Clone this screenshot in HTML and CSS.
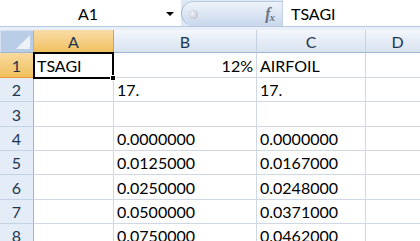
FILE: index.html
```html
<!DOCTYPE html>
<html>
<head>
<meta charset="utf-8">
<link rel="stylesheet" href="styles.css">
</head>
<body>
<div class="app">
  <div class="fbar">
    <div class="namebox"><span class="nb-text">A1</span><span class="arrow"></span></div>
    <div class="pill"><span class="dot"></span><span class="fx">f<sub>x</sub></span></div>
    <div class="formula">TSAGI</div>
  </div>
  <div class="band"></div>
  <div class="sheet">
    <div class="corner"><span class="tri"></span></div>
    <div class="ch sel">A</div>
    <div class="ch">B</div>
    <div class="ch">C</div>
    <div class="ch">D</div>

    <div class="rh sel r25">1</div>
    <div class="c active">TSAGI<span class="handle"></span></div>
    <div class="c right">12%</div>
    <div class="c">AIRFOIL</div>
    <div class="c"></div>

    <div class="rh">2</div>
    <div class="c"></div>
    <div class="c">17.</div>
    <div class="c">17.</div>
    <div class="c"></div>

    <div class="rh">3</div>
    <div class="c"></div><div class="c"></div><div class="c"></div><div class="c"></div>

    <div class="rh">4</div>
    <div class="c"></div>
    <div class="c">0.0000000</div>
    <div class="c">0.0000000</div>
    <div class="c"></div>

    <div class="rh">5</div>
    <div class="c"></div>
    <div class="c">0.0125000</div>
    <div class="c">0.0167000</div>
    <div class="c"></div>

    <div class="rh">6</div>
    <div class="c"></div>
    <div class="c">0.0250000</div>
    <div class="c">0.0248000</div>
    <div class="c"></div>

    <div class="rh">7</div>
    <div class="c"></div>
    <div class="c">0.0500000</div>
    <div class="c">0.0371000</div>
    <div class="c"></div>

    <div class="rh">8</div>
    <div class="c"></div>
    <div class="c">0.0750000</div>
    <div class="c">0.0462000</div>
    <div class="c"></div>
  </div>
</div>
</body>
</html>
```

FILE: styles.css
```css
html, body {
  margin: 0;
  padding: 0;
  background: #ffffff;
  overflow: hidden;
}
.app {
  width: 420px;
  height: 241px;
  overflow: hidden;
  font-family: Lato, "Open Sans", sans-serif;
  font-size: 16px;
  color: #000;
}
.fbar {
  display: flex;
  height: 26px;
  background: #dfe8f5;
}
.namebox {
  width: 181px;
  background: #fff;
  display: flex;
  align-items: center;
  position: relative;
}
.nb-text {
  flex: 1;
  text-align: center;
  padding-left: 10px;
}
.arrow {
  width: 0;
  height: 0;
  border-left: 4px solid transparent;
  border-right: 4px solid transparent;
  border-top: 4px solid #000;
  margin-right: 7px;
  margin-top: 1px;
}
.pill {
  width: 100px;
  margin-top: 1px;
  border-radius: 13px 0 0 13px;
  background: linear-gradient(#eef3fa, #dde7f4 45%, #c8d7ec);
  border-left: 1px solid #a5b9d4;
  border-top: 1px solid #b9cae0;
  display: flex;
  align-items: center;
  position: relative;
}
.dot {
  width: 9px;
  height: 9px;
  border-radius: 50%;
  background: radial-gradient(circle at 40% 40%, #f4f6f9, #aab3bf);
  margin-left: 7px;
}
.fx {
  margin-left: auto;
  margin-right: 8px;
  font-family: "Liberation Serif", serif;
  font-style: italic;
  font-weight: bold;
  font-size: 16px;
  color: #6d7480;
  letter-spacing: -1px;
}
.fx sub {
  font-size: 11px;
  vertical-align: -2px;
}
.formula {
  flex: 1;
  background: #fff;
  border-left: 1px solid #c3cfdf;
  padding-left: 8px;
  display: flex;
  align-items: center;
}
.band {
  height: 4px;
  border-top: 1px solid #b8c9df;
  background: #e9eff8;
  box-sizing: border-box;
}
.sheet {
  display: grid;
  grid-template-columns: 34px 80px 143px 109px 64px;
  grid-template-rows: 23px 25px 24px 25px 24px 24px 25px 24px 24px;
}
.corner {
  background: #b9cde7;
  border: 1px solid #d6e2f1;
  border-right-color: #9eb6ce;
  border-bottom-color: #9eb6ce;
  box-sizing: border-box;
  position: relative;
}
.tri {
  position: absolute;
  right: 3px;
  bottom: 3px;
  width: 0;
  height: 0;
  border-left: 14px solid transparent;
  border-bottom: 14px solid #eef1f6;
}
.ch {
  background: linear-gradient(#f4f7fc, #e5ecf6 50%, #d9e3f1);
  border-right: 1px solid #c5d2e2;
  border-bottom: 1px solid #9eb6ce;
  box-sizing: border-box;
  display: flex;
  align-items: center;
  justify-content: center;
  color: #1e3550;
}
.ch.sel {
  background: linear-gradient(#f9dca6, #f5cf86 50%, #f1c15f);
  border-right-color: #f29536;
  border-bottom-color: #f29536;
}
.rh {
  background: #e4ecf7;
  border-right: 1px solid #9eb6ce;
  border-bottom: 1px solid #c5d2e2;
  box-sizing: border-box;
  display: flex;
  align-items: center;
  justify-content: center;
  color: #1e3550;
}
.rh.sel {
  background: linear-gradient(#f9d99f, #f1c15f);
  border-right-color: #f29536;
  border-bottom-color: #f29536;
}
.c {
  border-right: 1px solid #d0d7e5;
  border-bottom: 1px solid #d0d7e5;
  box-sizing: border-box;
  display: flex;
  align-items: center;
  padding: 0 3px 0 3px;
  white-space: nowrap;
}
.c.right {
  justify-content: flex-end;
}
.c.active {
  border: 2px solid #000;
  margin: -1px 0 -1px -1px;
  padding-left: 2px;
  position: relative;
}
.handle {
  position: absolute;
  right: -4px;
  bottom: -4px;
  width: 6px;
  height: 6px;
  background: #000;
  border: 1px solid #fff;
  box-sizing: border-box;
}
```
